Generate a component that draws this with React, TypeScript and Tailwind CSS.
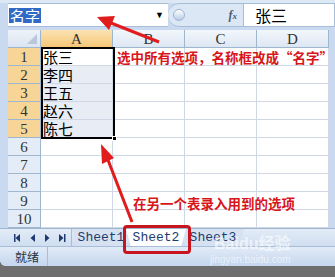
import React from 'react';

const cjk = { fontFamily: '"Noto Sans CJK SC", sans-serif' };
const serif = { fontFamily: '"Liberation Serif", "Noto Sans CJK SC", serif' };
const mono = { fontFamily: '"Liberation Mono", monospace' };

const cols = ['A', 'B', 'C', 'D'];
const names = ['张三', '李四', '王五', '赵六', '陈七'];

// sheet navigation buttons: first, prev, next, last
const NavIcons = () => (
  <svg width="60" height="10" viewBox="0 0 60 10" className="ml-[2px]">
    <g fill="#1f3a73">
      <rect x="4" y="1" width="1.5" height="8" />
      <polygon points="10,1 10,9 5.5,5" />
      <polygon points="25,1 25,9 20.5,5" />
      <polygon points="35,1 35,9 39.5,5" />
      <polygon points="49,1 49,9 53.5,5" />
      <rect x="54" y="1" width="1.5" height="8" />
    </g>
  </svg>
);

const App = () => {
  const rows = Array.from({ length: 10 }, (_, i) => i + 1);

  return (
    <div className="relative w-[335px] h-[277px] overflow-hidden bg-[#6e6e6e]">
      <div className="flex flex-col w-[335px] h-[266px] bg-[#c9daf0] rounded-bl-[6px] overflow-hidden">
        {/* top strip */}
        <div className="h-[3px] bg-[#dde8f5]" />

        {/* formula bar */}
        <div className="flex h-[24px] pl-[8px] bg-[#c9daf0]">
          <div className="flex items-center w-[160px] bg-white border-y border-[#a7bdd9] pl-[1px]">
            <span className="bg-[#316ac5] text-white text-[15px] leading-[15px] px-[1px]" style={cjk}>
              名字
            </span>
            <span className="ml-auto mr-[4px] text-[9px] text-black">▼</span>
          </div>
          <div className="flex items-center w-[75px] bg-[#dce7f5] border-y border-[#a7bdd9] rounded-l-[12px]">
            <div className="w-[12px] h-[12px] rounded-full bg-gradient-to-b from-white to-[#b9cce6] border border-[#9fb4d2] ml-[5px]" />
            <span className="ml-auto mr-[6px] italic font-bold text-[12px] text-[#4a5a70]" style={serif}>
              f<span className="text-[9px]">x</span>
            </span>
          </div>
          <div className="flex items-center flex-1 bg-white border border-[#a7bdd9] pl-[11px]">
            <span className="text-[16px] leading-[18px] text-black" style={cjk}>张三</span>
          </div>
        </div>
        <div className="h-[3px] bg-[#c9daf0]" />

        {/* grid */}
        <div className="flex pl-[8px]">
          <div className="grid grid-cols-[33px_72px_72px_72px_72px] grid-rows-[repeat(11,18px)] bg-white">
            <div className="relative bg-gradient-to-b from-[#eef3fa] to-[#dae4f1] border-r border-b border-[#9eb6ce]">
              <div className="absolute right-[3px] bottom-[3px] w-0 h-0 border-l-[10px] border-l-transparent border-b-[10px] border-b-[#b8c7da]" />
            </div>
            {cols.map((c, i) => (
              <div
                key={c}
                className={`flex items-center justify-center text-[15px] leading-[16px] text-[#333] border-r border-b border-[#9eb6ce] ${
                  i === 0 ? 'bg-gradient-to-b from-[#fbe2b2] to-[#f5c776]' : 'bg-gradient-to-b from-[#f3f7fc] to-[#dde7f3]'
                }`}
                style={serif}
              >
                {c}
              </div>
            ))}
            {rows.map((r) => (
              <React.Fragment key={r}>
                <div
                  className={`flex items-center justify-center text-[15px] leading-[16px] text-[#333] border-r border-b border-[#9eb6ce] ${
                    r <= 5 ? 'bg-[#f7d596]' : 'bg-[#e4ecf7]'
                  }`}
                  style={serif}
                >
                  {r}
                </div>
                {cols.map((c, i) => (
                  <div
                    key={c}
                    className={`flex items-center pl-[2px] text-[15px] leading-[15px] text-black border-r border-b border-[#d0d7e5] ${
                      i === 0 && r >= 2 && r <= 5 ? 'bg-[#e8ecf5]' : 'bg-white'
                    }`}
                    style={cjk}
                  >
                    {i === 0 && r <= 5 ? names[r - 1] : ''}
                  </div>
                ))}
              </React.Fragment>
            ))}
          </div>
        </div>

        {/* sheet tabs */}
        <div className="flex items-stretch h-[18px] pl-[8px] bg-gradient-to-b from-[#e3ecf7] to-[#d0def1] border-t border-[#9eb6ce]">
          <div className="flex items-center w-[64px] border-r border-[#a7bdd9]">
            <NavIcons />
          </div>
          <div
            className="flex items-center justify-center w-[58px] -mr-[4px] text-[13px] leading-[14px] text-[#1e3c6e] bg-[#d6e2f2] [clip-path:polygon(0_0,100%_0,92%_100%,8%_100%)]"
            style={mono}
          >
            Sheet1
          </div>
          <div
            className="relative z-10 flex items-center justify-center w-[60px] -mr-[4px] text-[13px] leading-[14px] text-[#1e3c6e] bg-white [clip-path:polygon(0_0,100%_0,92%_100%,8%_100%)]"
            style={mono}
          >
            Sheet2
          </div>
          <div
            className="flex items-center justify-center w-[62px] text-[13px] leading-[14px] text-[#1e3c6e] bg-[#d6e2f2] [clip-path:polygon(0_0,100%_0,92%_100%,8%_100%)]"
            style={mono}
          >
            Sheet3
          </div>
        </div>

        {/* status bar */}
        <div className="flex items-center flex-1 bg-gradient-to-b from-[#e2ebf7] to-[#c4d6ee] border-t border-[#a7bdd9]">
          <div className="flex items-center h-full w-[48px] pl-[15px] border-r border-[#a7bdd9] text-[12px] text-[#24303f]" style={cjk}>
            就绪
          </div>
        </div>
      </div>

      {/* selection border A1:A5 */}
      <div className="absolute left-[41px] top-[47px] w-[74px] h-[92px] border-2 border-black" />
      <div className="absolute left-[112px] top-[136px] w-[5px] h-[5px] bg-black border border-white" />

      {/* annotations */}
      <div className="absolute left-[117px] top-[48px] text-[13.5px] leading-[18px] font-bold text-[#d8161a] whitespace-nowrap" style={cjk}>
        选中所有选项，名称框改成“名字”
      </div>
      <div className="absolute left-[133px] top-[194px] text-[13.5px] leading-[18px] font-bold text-[#d8161a] whitespace-nowrap" style={cjk}>
        在另一个表录入用到的选项
      </div>

      <svg className="absolute left-0 top-0" width="335" height="277" viewBox="0 0 335 277">
        <line x1="159" y1="42" x2="111" y2="23" stroke="#e01c1c" strokeWidth="3" />
        <polygon points="97,17 115,16 109,30" fill="#e01c1c" />
        <line x1="132" y1="222" x2="108" y2="160" stroke="#e01c1c" strokeWidth="3" />
        <polygon points="101,144 114,158 102,164" fill="#e01c1c" />
      </svg>

      {/* highlight box around Sheet2 */}
      <div className="absolute left-[123px] top-[225px] w-[68px] h-[29px] border-[3px] border-[#c8141c] rounded-[4px]" />

      {/* watermark */}
      <div className="absolute left-[214px] top-[236px] text-[16px] leading-[16px] font-bold text-white/60 whitespace-nowrap" style={{ fontFamily: '"Liberation Sans", "Noto Sans CJK SC", sans-serif' }}>
        Baidu经验
      </div>
      <div className="absolute left-[210px] top-[255px] text-[10px] leading-[10px] text-white/60 whitespace-nowrap" style={{ fontFamily: '"Liberation Sans", sans-serif' }}>
        jingyan.baidu.com
      </div>
    </div>
  );
};

export default App;
